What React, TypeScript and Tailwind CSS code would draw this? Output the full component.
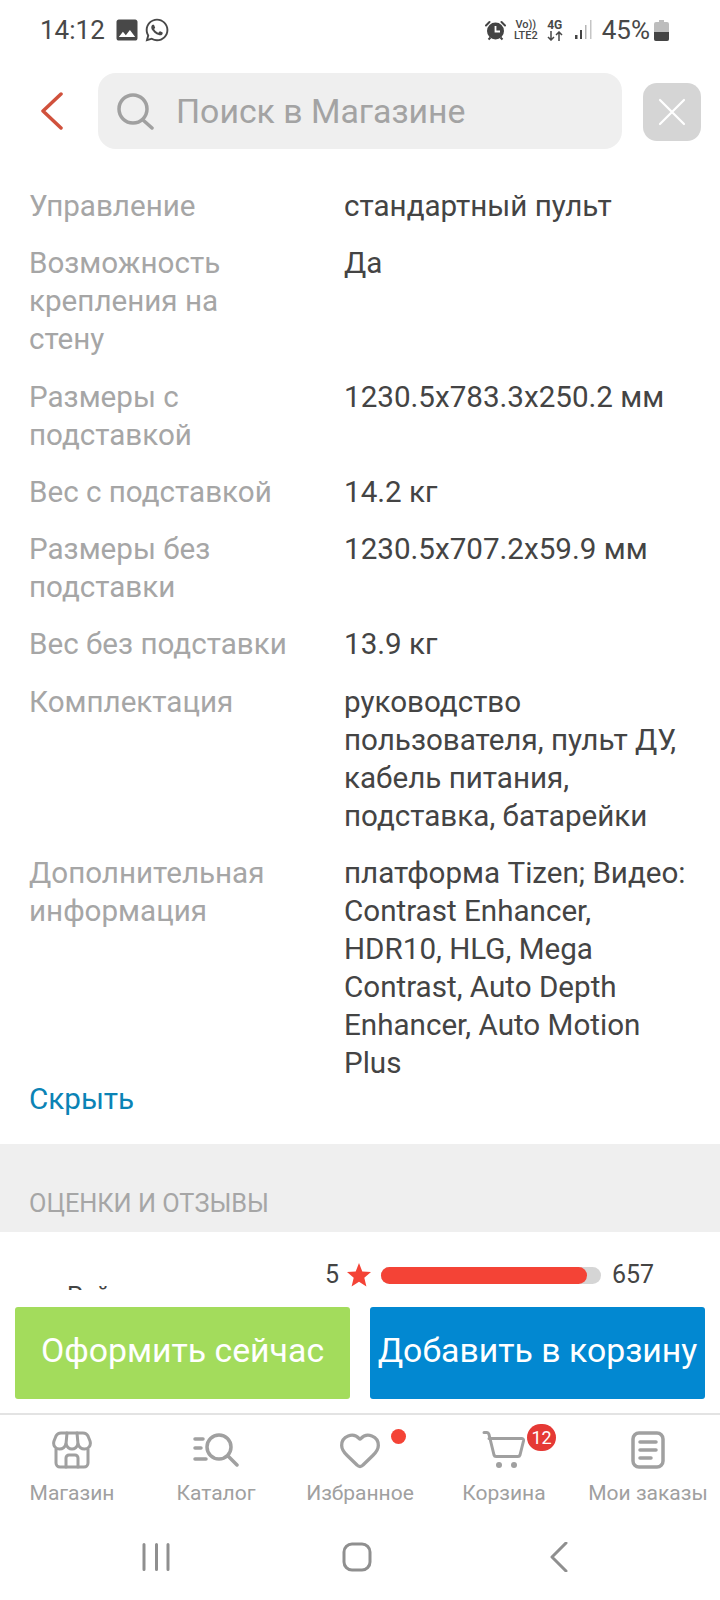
import { Heart } from "lucide-react";
import { FaWhatsapp } from "react-icons/fa";
import { MdImage } from "react-icons/md";

const specs = [
  { name: "Управление", value: "стандартный пульт" },
  { name: "Возможность крепления на стену", value: "Да" },
  { name: "Размеры с подставкой", value: "1230.5x783.3x250.2 мм" },
  { name: "Вес с подставкой", value: "14.2 кг" },
  { name: "Размеры без подставки", value: "1230.5x707.2x59.9 мм" },
  { name: "Вес без подставки", value: "13.9 кг" },
  { name: "Комплектация", value: "руководство пользователя, пульт ДУ, кабель питания, подставка, батарейки" },
  { name: "Дополнительная информация", value: "платформа Tizen; Видео: Contrast Enhancer, HDR10, HLG, Mega Contrast, Auto Depth Enhancer, Auto Motion Plus" },
];

const StoreIcon = () => (
  <svg width="40" height="38" viewBox="0 0 40 38" fill="none" stroke="#a0a0a0" strokeWidth="3" strokeLinejoin="round" strokeLinecap="round">
    <path d="M9 2h22c3 0 4 1 5 3l2 5c1.500 5-2 8-5.500 8-3 0-5.500-2-6.500-5-1 3-3 5-6 5s-5-2-6-5c-1 3-3.500 5-6.500 5C4 18 .5 15 2 10l2-5c1-2 2-3 5-3Z" />
    <path d="M4 18v14a4 4 0 0 0 4 4h24a4 4 0 0 0 4-4V18" />
    <path d="M14 36v-9a3 3 0 0 1 3-3h6a3 3 0 0 1 3 3v9" />
    <path d="M15 2l-1 11M25 2l1 11" />
  </svg>
);

const CatalogIcon = () => (
  <svg width="46" height="34" viewBox="0 0 46 34" fill="none" stroke="#a0a0a0" strokeWidth="3.500" strokeLinecap="round">
    <path d="M2 6h8M2 15h6M2 26h11" />
    <circle cx="26" cy="14" r="12" />
    <path d="M35 23l9 9" />
  </svg>
);

const OrdersIcon = () => (
  <svg width="34" height="38" viewBox="0 0 34 38" fill="none" stroke="#a0a0a0" strokeWidth="3.500" strokeLinecap="round">
    <rect x="2" y="2" width="30" height="34" rx="6" />
    <path d="M9 11h16M9 19h16M9 27h11" />
  </svg>
);

const CartIcon = () => (
  <svg width="44" height="38" viewBox="0 0 44 38" fill="none" stroke="#a0a0a0" strokeWidth="3" strokeLinecap="round" strokeLinejoin="round">
    <path d="M2 1.500h3c1 0 1.500.5 2 2L12 24c.3 1 1 1.500 2 1.500h22c1 0 1.700-.5 2-1.500l3.500-14c.3-1.500-.5-2.500-2-2.500H7" />
    <circle cx="17" cy="34" r="3" fill="#a0a0a0" stroke="none" />
    <circle cx="32" cy="34" r="3" fill="#a0a0a0" stroke="none" />
  </svg>
);

const AlarmIcon = () => (
  <svg width="21" height="21" viewBox="0 0 21 21">
    <circle cx="10.500" cy="11" r="8.500" fill="#444" />
    <path d="M10.500 6v5.500H15" fill="none" stroke="#fff" strokeWidth="1.800" />
    <path d="M1 5.500L4.500 2M20 5.500L16.500 2" fill="none" stroke="#444" strokeWidth="2" strokeLinecap="round" />
    <path d="M3.500 19.500l2-2M17.500 19.500l-2-2" fill="none" stroke="#444" strokeWidth="2" />
  </svg>
);

const DataArrows = () => (
  <svg width="16" height="10" viewBox="0 0 16 10" fill="none" stroke="#484848" strokeWidth="1.500">
    <path d="M4 0v9M1 6l3 3 3-3" />
    <path d="M12 10V1M9 4l3-3 3 3" />
  </svg>
);

const SignalIcon = () => (
  <svg width="18" height="20" viewBox="0 0 18 20">
    <rect x="0" y="15" width="2.500" height="4" fill="#444" />
    <rect x="5" y="10" width="2" height="9" fill="#444" />
    <rect x="10" y="5" width="1.500" height="14" fill="#b5b5b5" />
    <rect x="15" y="0" width="1.500" height="19" fill="#c5c5c5" />
  </svg>
);

const BatteryIcon = () => (
  <svg width="15" height="21" viewBox="0 0 15 21">
    <path d="M5 0h5v2h3a2 2 0 0 1 2 2v15a2 2 0 0 1-2 2H2a2 2 0 0 1-2-2V4a2 2 0 0 1 2-2h3Z" fill="#bdbdbd" />
    <path d="M0 12h15v7a2 2 0 0 1-2 2H2a2 2 0 0 1-2-2Z" fill="#444" />
  </svg>
);

const App = () => {
  return (
    <div className="w-[720px] h-[1600px] bg-white flex flex-col overflow-hidden font-['Roboto',sans-serif]">
      {/* status bar */}
      <div className="h-[60px] shrink-0 flex items-center justify-between pl-[40px] pr-[51px] text-[#484848]">
        <div className="flex items-center">
          <span className="text-[26px] leading-none">14:12</span>
          <MdImage className="ml-[8px] text-[28px]" />
          <FaWhatsapp className="ml-[3px] text-[26px]" />
        </div>
        <div className="flex items-center">
          <AlarmIcon />
          <div className="ml-[8px] flex flex-col items-center text-[11px] leading-[11px] font-medium">
            <span>Vo))</span>
            <span>LTE2</span>
          </div>
          <div className="ml-[9px] flex flex-col items-center">
            <span className="text-[12px] leading-[12px] font-bold">4G</span>
            <DataArrows />
          </div>
          <div className="ml-[12px]">
            <SignalIcon />
          </div>
          <span className="ml-[9px] text-[26px] leading-none">45%</span>
          <div className="ml-[4px]">
            <BatteryIcon />
          </div>
        </div>
      </div>

      {/* search header */}
      <div className="h-[102px] shrink-0 flex items-start pt-[13px]">
        <div className="w-[98px] h-[76px] flex items-center pl-[41px]">
          <svg width="22" height="38" viewBox="0 0 22 38" fill="none" stroke="#d0513c" strokeWidth="3.500" strokeLinecap="round" strokeLinejoin="round">
            <path d="M20 2L2 19l18 17" />
          </svg>
        </div>
        <div className="w-[524px] h-[76px] rounded-[18px] bg-[#efefef] flex items-center pl-[19px]">
          <svg width="37" height="37" viewBox="0 0 37 37" fill="none" stroke="#a0a0a0" strokeWidth="3.500" strokeLinecap="round">
            <circle cx="16" cy="16" r="14" />
            <path d="M26 27l9 8" />
          </svg>
          <span className="ml-[22px] mt-[3px] text-[33.800px] text-[#a3a3a3]">Поиск в Магазине</span>
        </div>
        <div className="ml-[21px] mt-[10px] w-[58px] h-[58px] rounded-[14px] bg-[#d5d5d5] flex items-center justify-center">
          <svg width="28" height="28" viewBox="0 0 28 28" stroke="#ffffff" strokeWidth="2.200" strokeLinecap="round">
            <path d="M2 2l24 24M26 2L2 26" />
          </svg>
        </div>
      </div>

      {/* scrolling content */}
      <div className="flex-1 min-h-0 overflow-hidden">
        <div className="pt-[25px] px-[29px] flex flex-col gap-[19.300px] text-[29.600px] leading-[38px]">
          {specs.map((spec) => (
            <div key={spec.name} className="grid grid-cols-[315px_1fr]">
              <div className="text-[#a6a6a6] pr-[50px]">{spec.name}</div>
              <div className="text-[#444444]">{spec.value}</div>
            </div>
          ))}
        </div>
        <div className="-mt-[2px] px-[29px] text-[29.600px] leading-[38px] text-[#0b83b5]">Скрыть</div>
        <div className="mt-[26px] h-[88px] bg-[#efefef] px-[29px] pt-[43px] text-[25.300px] leading-[34px] text-[#a6a6a6]">
          ОЦЕНКИ И ОТЗЫВЫ
        </div>
        <div className="flex pt-[29px]">
          <div className="w-[325px] pl-[67px] pt-[19px] text-[25px] leading-[34px] text-[#444444]">Рейтинг</div>
          <div className="flex items-center h-[28px]">
            <span className="w-[22px] text-[25px] text-[#444444]">5</span>
            <svg width="24" height="24" viewBox="0 0 24 24" fill="#f44336">
              <path d="M12 0l3.300 8.400 8.700.6-6.700 5.700 2.100 8.800L12 18.700l-7.400 4.800 2.100-8.800L0 9l8.700-.6Z" />
            </svg>
            <div className="ml-[10px] w-[220px] h-[17px] rounded-full bg-[#d5d5d5]">
              <div className="w-[206px] h-[17px] rounded-full bg-[#f44336]" />
            </div>
            <span className="ml-[11px] text-[25px] text-[#444444]">657</span>
          </div>
        </div>
      </div>

      {/* buy buttons */}
      <div className="h-[123px] shrink-0 bg-white flex gap-[20px] px-[15px] pt-[17px]">
        <div className="w-[335px] h-[92px] pb-[3px] rounded-[3px] bg-[#a3dc5c] text-white text-[33.800px] flex items-center justify-center">
          Оформить сейчас
        </div>
        <div className="w-[335px] h-[92px] pb-[3px] rounded-[3px] bg-[#0288d1] text-white text-[33.800px] flex items-center justify-center whitespace-nowrap">
          Добавить в корзину
        </div>
      </div>

      {/* tab bar */}
      <div className="h-[107px] shrink-0 border-t-2 border-[#e3e3e3] grid grid-cols-5 text-[21px] text-[#a0a0a0]">
        <div className="flex flex-col items-center pt-[15px]">
          <div className="h-[40px] flex items-center"><StoreIcon /></div>
          <span className="mt-[9px] leading-[28px]">Магазин</span>
        </div>
        <div className="flex flex-col items-center pt-[15px]">
          <div className="h-[40px] flex items-center"><CatalogIcon /></div>
          <span className="mt-[9px] leading-[28px]">Каталог</span>
        </div>
        <div className="flex flex-col items-center pt-[15px]">
          <div className="relative h-[40px] flex items-center">
            <Heart size={44} strokeWidth={1.800} className="text-[#a0a0a0]" />
            <span className="absolute left-[53px] top-[-1px] w-[15px] h-[15px] rounded-full bg-[#f44336]" />
          </div>
          <span className="mt-[9px] leading-[28px] whitespace-nowrap">Избранное</span>
        </div>
        <div className="flex flex-col items-center pt-[15px]">
          <div className="relative h-[40px] flex items-center">
            <CartIcon />
            <span className="absolute left-[45px] top-[-6px] w-[29px] h-[27px] rounded-full bg-[#e53935] text-white text-[18px] leading-[27px] text-center">12</span>
          </div>
          <span className="mt-[9px] leading-[28px]">Корзина</span>
        </div>
        <div className="flex flex-col items-center pt-[15px]">
          <div className="h-[40px] flex items-center"><OrdersIcon /></div>
          <span className="mt-[9px] leading-[28px] whitespace-nowrap">Мои заказы</span>
        </div>
      </div>

      {/* android nav */}
      <div className="h-[80px] shrink-0 flex items-center pb-[6px] pl-[142px]">
        <svg width="28" height="28" viewBox="0 0 28 28" stroke="#8f8f8f" strokeWidth="3" strokeLinecap="round">
          <path d="M2 1.500v25M14.500 1.500v25M26 1.500v25" />
        </svg>
        <svg className="ml-[172px]" width="30" height="30" viewBox="0 0 30 30" fill="none" stroke="#8f8f8f" strokeWidth="3">
          <rect x="2" y="2" width="26" height="26" rx="8" />
        </svg>
        <svg className="ml-[178px]" width="18" height="30" viewBox="0 0 18 30" fill="none" stroke="#8f8f8f" strokeWidth="3" strokeLinecap="round" strokeLinejoin="round">
          <path d="M16 1L2 15l14 14" />
        </svg>
      </div>
    </div>
  );
};

export default App;
